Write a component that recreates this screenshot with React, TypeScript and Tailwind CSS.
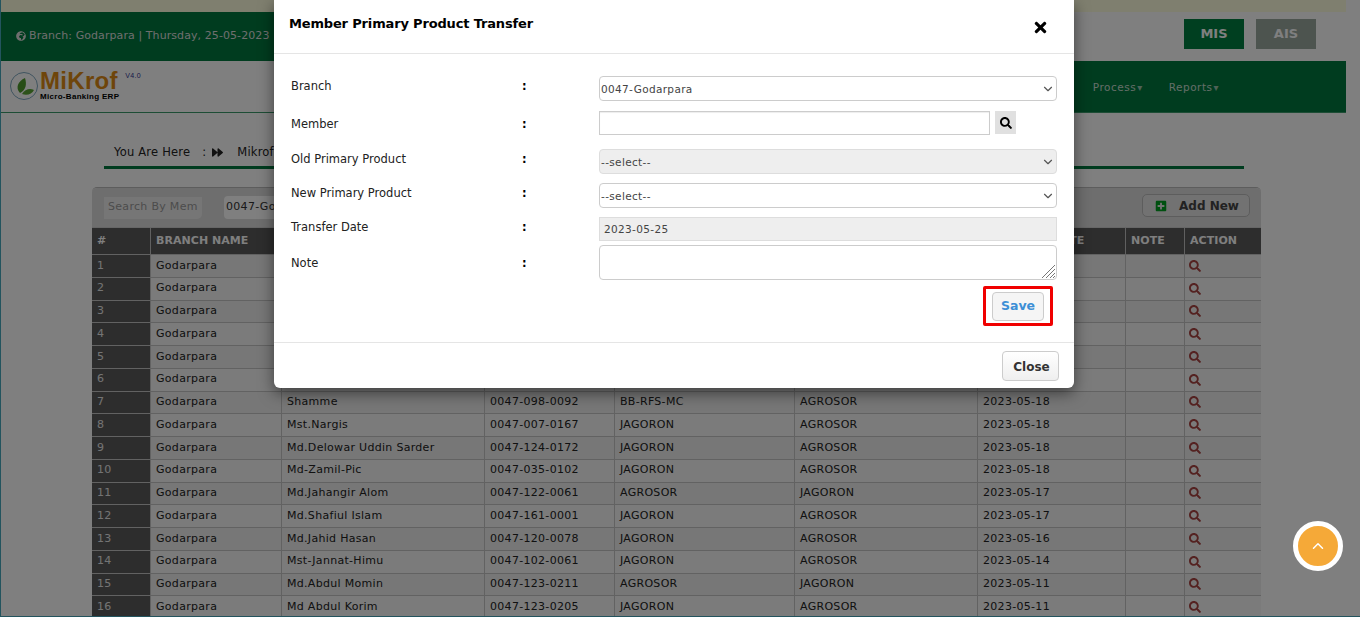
import { FaForward, FaGlobeAfrica, FaPlusSquare, FaSearch, FaTimes } from 'react-icons/fa';
import { ChevronDown, ChevronUp } from 'lucide-react';

const rows = [
  { name: '', code: '', oldP: '', newP: '', date: '' },
  { name: '', code: '', oldP: '', newP: '', date: '' },
  { name: '', code: '', oldP: '', newP: '', date: '' },
  { name: '', code: '', oldP: '', newP: '', date: '' },
  { name: '', code: '', oldP: '', newP: '', date: '' },
  { name: '', code: '', oldP: '', newP: '', date: '' },
  { name: 'Shamme', code: '0047-098-0092', oldP: 'BB-RFS-MC', newP: 'AGROSOR', date: '2023-05-18' },
  { name: 'Mst.Nargis', code: '0047-007-0167', oldP: 'JAGORON', newP: 'AGROSOR', date: '2023-05-18' },
  { name: 'Md.Delowar Uddin Sarder', code: '0047-124-0172', oldP: 'JAGORON', newP: 'AGROSOR', date: '2023-05-18' },
  { name: 'Md-Zamil-Pic', code: '0047-035-0102', oldP: 'JAGORON', newP: 'AGROSOR', date: '2023-05-18' },
  { name: 'Md.Jahangir Alom', code: '0047-122-0061', oldP: 'AGROSOR', newP: 'JAGORON', date: '2023-05-17' },
  { name: 'Md.Shafiul Islam', code: '0047-161-0001', oldP: 'JAGORON', newP: 'AGROSOR', date: '2023-05-17' },
  { name: 'Md.Jahid Hasan', code: '0047-120-0078', oldP: 'JAGORON', newP: 'AGROSOR', date: '2023-05-16' },
  { name: 'Mst-Jannat-Himu', code: '0047-102-0061', oldP: 'JAGORON', newP: 'AGROSOR', date: '2023-05-14' },
  { name: 'Md.Abdul Momin', code: '0047-123-0211', oldP: 'AGROSOR', newP: 'JAGORON', date: '2023-05-11' },
  { name: 'Md Abdul Korim', code: '0047-123-0205', oldP: 'JAGORON', newP: 'AGROSOR', date: '2023-05-11' },
];

const cols = 'grid grid-cols-[58px_131px_203px_130px_180px_183px_148px_59px_77px]';

function Logo() {
  return (
    <div className="flex items-start">
      <svg width="30" height="30" viewBox="0 0 30 30" className="mt-[10px] ml-[8px]">
        <circle cx="15" cy="15" r="13.5" fill="none" stroke="#7fa8c0" strokeWidth="1" />
        <path d="M11 22C6 17 9 10 16 7C18 13 17 19 11 22Z" fill="#4f9a2c" />
        <path d="M13 23C16 18 21 17 25 19C23 23 18 25 13 23Z" fill="#5aa534" />
      </svg>
      <div className="ml-[1px] mt-[8px] font-['Liberation_Sans',sans-serif]">
        <div className="text-[24px] leading-[23px] font-bold text-[#dd8a14]">MiKrof</div>
        <div className="text-[8px] leading-[10px] font-bold text-black">Micro-Banking ERP</div>
      </div>
      <div className="ml-[6px] mt-[11px] text-[7px] leading-[8px] font-['Liberation_Sans',sans-serif] text-[#2e3192]">V4.0</div>
    </div>
  );
}

function Page() {
  return (
    <div className="h-[617px] overflow-hidden border-l border-b border-[#46a8bc] bg-white text-[11px] tracking-[0.3px] text-[#222]">
      <div className="w-[1345px]">
        <div className="h-[12px] bg-[#fffede]" />
        <div className="flex h-[49px]">
          <div className="flex w-[301px] items-center gap-[3px] bg-[#00793f] pl-[15px] pb-[1px] tracking-[0.08px] text-[#ddd]">
            <FaGlobeAfrica size={10} />
            <span>Branch: Godarpara | Thursday, 25-05-2023</span>
          </div>
          <div className="flex flex-1 justify-end gap-3 pt-[7px] pr-[30px]">
            <div className="flex h-[30px] w-[60px] items-center justify-center bg-[#007f40] text-[13px] font-bold tracking-normal text-white">MIS</div>
            <div className="flex h-[30px] w-[60px] items-center justify-center bg-[#9aa89f] text-[13px] font-bold tracking-normal text-white">AIS</div>
          </div>
        </div>
        <div className="flex h-[52px] border-b border-[#3a9a6a]">
          <div className="w-[301px]">
            <Logo />
          </div>
          <div className="flex flex-1 items-center justify-end gap-[26px] bg-[#00793f] pr-[127px] pt-[3px] text-[10.5px] tracking-[0.5px] text-[#c8dcd0]">
            <span>Process<span className="ml-[1px] text-[10px] text-[#9cc4b0]">▾</span></span>
            <span>Reports<span className="ml-[1px] text-[10px] text-[#9cc4b0]">▾</span></span>
          </div>
        </div>

        <div className="ml-[103px] mr-[102px] mt-[31px] h-[25px] border-b-[3px] border-[#00793f] pl-[10px] text-[11.5px] tracking-[0.2px]">
          <div className="flex items-center">
            <span>You Are Here</span>
            <span className="ml-[12px]">:</span>
            <FaForward size={11} className="ml-[6px]" />
            <span className="ml-[14px]">Mikrof</span>
          </div>
        </div>

        <div className="ml-[91px] mt-[18px] w-[1169px] overflow-hidden rounded-t-[5px] border-t border-[#bbb]">
          <div className="flex h-[40px] items-center justify-between border-b border-[#ccc] bg-[#dcdcdc] pl-[12px] pr-[11px]">
            <div className="flex items-center gap-[22px]">
              <div className="flex h-[22px] w-[98px] items-center overflow-hidden whitespace-nowrap rounded-br-[5px] bg-[#ededed] pl-[4px] text-[11px] text-[#999]">Search By Mem</div>
              <div className="flex h-[23px] w-[120px] items-center rounded-l-[4px] bg-white pl-[2px] text-[#333]">0047-Godarpara</div>
            </div>
            <div className="mb-[4px] flex h-[23px] w-[108px] items-center rounded-[5px] border border-[#bbb] bg-[#e4e4e4] pl-[12px] text-[12px] font-bold tracking-normal text-[#444]">
              <FaPlusSquare size={12} className="text-[#00a020]" />
              <span className="ml-[12px]">Add New</span>
            </div>
          </div>
          <div className={`${cols} h-[26px] bg-[#5a5a5a] font-bold tracking-[0.05px] text-white`}>
            {['#', 'BRANCH NAME', 'MEMBER NAME', 'MEMBER CODE', 'OLD PRIMARY PRODUCT', 'NEW PRIMARY PRODUCT', 'TRANSFER DATE', 'NOTE', 'ACTION'].map((h, i) => (
              <div key={h} className={`flex items-center overflow-hidden whitespace-nowrap pl-[5px] ${i > 0 ? 'border-l border-[#c0c0c0]' : ''}`}>{h}</div>
            ))}
          </div>
          {rows.map((r, i) => (
            <div key={i} className={`${cols} h-[22.75px] border-t border-[#c4c4c4] ${i % 2 === 0 ? 'bg-[#eeeeee]' : 'bg-[#f6f6f6]'}`}>
              <div className="flex items-center bg-[#5a5a5a] pl-[5px] text-[#e8e8e8]">{i + 1}</div>
              <div className="flex items-center border-l border-[#c4c4c4] pl-[5px]">Godarpara</div>
              <div className="flex items-center border-l border-[#c4c4c4] pl-[5px]">{r.name}</div>
              <div className="flex items-center border-l border-[#c4c4c4] pl-[5px]">{r.code}</div>
              <div className="flex items-center border-l border-[#c4c4c4] pl-[5px]">{r.oldP}</div>
              <div className="flex items-center border-l border-[#c4c4c4] pl-[5px]">{r.newP}</div>
              <div className="flex items-center border-l border-[#c4c4c4] pl-[5px]">{r.date}</div>
              <div className="border-l border-[#c4c4c4]" />
              <div className="flex items-center border-l border-[#c4c4c4] pl-[4px] text-[#a94442]">
                <FaSearch size={12} />
              </div>
            </div>
          ))}
        </div>
      </div>
    </div>
  );
}

function Row({ label, labelPad, className, children }: { label: string; labelPad: string; className: string; children: React.ReactNode }) {
  return (
    <div className={`flex ${className}`}>
      <div className={`w-[231px] text-[#222] ${labelPad}`}>{label}</div>
      <div className={`w-[77px] font-bold ${labelPad}`}>:</div>
      <div className="flex-1">{children}</div>
    </div>
  );
}

function Select({ value, disabled }: { value: string; disabled?: boolean }) {
  return (
    <div className="relative">
      <select
        disabled={disabled}
        defaultValue={value}
        className={`block h-[25px] w-full appearance-none rounded-[4px] border pl-[1px] pt-[2px] text-[10.5px] tracking-[0.35px] text-[#444] opacity-100 ${disabled ? 'border-[#ddd] bg-[#eeeeee]' : 'border-[#ccc] bg-white'}`}
      >
        <option value={value}>{value}</option>
      </select>
      <ChevronDown size={14} strokeWidth={2} className="pointer-events-none absolute right-[2px] top-[6px] text-[#555]" />
    </div>
  );
}

function Modal() {
  return (
    <div className="ml-[274px] h-[388px] w-[800px] rounded-b-[6px] bg-white shadow-[0_5px_15px_rgba(0,0,0,0.5)]">
      <div className="flex h-[54px] items-start justify-between border-b border-[#e5e5e5] pl-[15px] pr-[25px]">
        <h4 className="pt-[15px] text-[13px] leading-[18px] font-bold tracking-[-0.16px] text-black">Member Primary Product Transfer</h4>
        <FaTimes size={17} className="mt-[19px] text-black" />
      </div>
      <div className="h-[289px] border-b border-[#e5e5e5] pl-[17px] pr-[17px] text-[11.5px]">
        <Row label="Branch" labelPad="pt-[2px]" className="pt-[22px]">
          <Select value="0047-Godarpara" />
        </Row>
        <Row label="Member" labelPad="pt-[5px]" className="mt-[10px]">
          <div className="flex items-start">
            <input className="h-[24px] w-[391px] border border-[#ccc] shadow-[inset_0_1px_1px_rgba(0,0,0,0.075)]" />
            <div className="ml-[5px] flex h-[23px] w-[21px] items-center justify-center bg-[#e0e0e0]">
              <FaSearch size={12} className="text-black" />
            </div>
          </div>
        </Row>
        <Row label="Old Primary Product" labelPad="pt-[2px]" className="mt-[14px]">
          <Select value="--select--" disabled />
        </Row>
        <Row label="New Primary Product" labelPad="pt-[2px]" className="mt-[9px]">
          <Select value="--select--" />
        </Row>
        <Row label="Transfer Date" labelPad="pt-[2px]" className="mt-[9px]">
          <input readOnly value="2023-05-25" className="block h-[24px] w-full border border-[#ddd] bg-[#eeeeee] pl-[4px] text-[10.5px] tracking-[0.35px] text-[#444]" />
        </Row>
        <Row label="Note" labelPad="pt-[10px]" className="mt-[4px]">
          <div className="relative">
            <textarea className="block h-[35px] w-full resize-none rounded-[4px] border border-[#ccc]" />
            <svg width="15" height="15" viewBox="0 0 15 15" className="pointer-events-none absolute bottom-[1px] right-[1px]" stroke="#777" strokeWidth="1">
              <path d="M1 14L14 1M5 14L14 5M9 14L14 9M12 14L14 12" />
            </svg>
          </div>
        </Row>
        <div className="mt-[6px] flex justify-end pr-[4px]">
          <div className="flex h-[40px] w-[70px] items-center justify-center rounded-[2px] border-[3px] border-[#f00000]">
            <button className="h-[29px] w-[52px] rounded-[4px] border border-[#ccc] bg-[#f5f5f5] text-[12.5px] font-bold text-[#3d8fd6]">Save</button>
          </div>
        </div>
      </div>
      <div className="flex justify-end pt-[8px] pr-[15px]">
        <button className="h-[30px] w-[57px] rounded-[4px] border border-[#ccc] bg-gradient-to-b from-white to-[#efefef] pt-[1px] pl-[2px] text-[12px] font-bold text-[#333]">Close</button>
      </div>
    </div>
  );
}

export default function App() {
  return (
    <div className="relative h-[617px] overflow-hidden font-['DejaVu_Sans',sans-serif]">
      <Page />
      {/* bootstrap style backdrop + dialog */}
      <div className="absolute inset-0 bg-black/50">
        <Modal />
        <div className="absolute left-[1293px] top-[521px] flex h-[50px] w-[50px] items-center justify-center rounded-full border-[5px] border-white bg-[#f5a938]">
          <ChevronUp size={18} strokeWidth={2} className="text-white" />
        </div>
      </div>
    </div>
  );
}
